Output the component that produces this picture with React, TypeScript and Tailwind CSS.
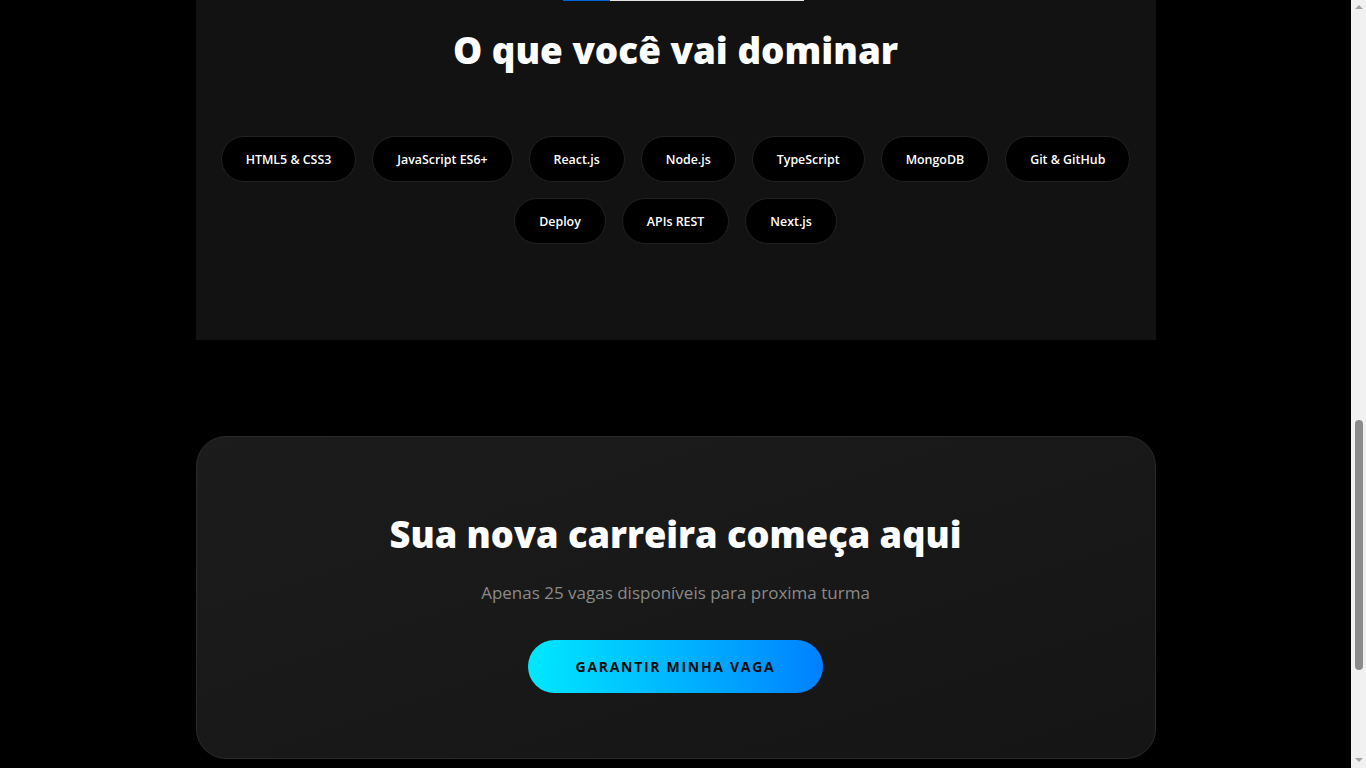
import React from 'react'

const skills = [
  'HTML5 & CSS3',
  'JavaScript ES6+',
  'React.js',
  'Node.js',
  'TypeScript',
  'MongoDB',
  'Git & GitHub',
  'Deploy',
  'APIs REST',
  'Next.js',
]

// barra de rolagem do navegador, como aparece no print
function Scrollbar() {
  return (
    <aside className="sticky top-0 flex h-screen w-[15px] shrink-0 flex-col items-center bg-[#f1f1f1]">
      <div className="mt-[5px] h-0 w-0 border-x-[4px] border-b-[4px] border-x-transparent border-b-[#a3a3a3]" />
      <div className="mt-[411px] h-[250px] w-[8px] rounded-full bg-[#8b8b8b]" />
      <div className="mt-auto mb-[6px] h-0 w-0 border-x-[4px] border-t-[4px] border-x-transparent border-t-[#a3a3a3]" />
    </aside>
  )
}

export default function App() {
  return (
    <div className="flex min-h-screen bg-black font-['Open_Sans',_'Noto_Sans',_sans-serif] text-white">
      <main className="flex-1 pb-[10px]">
        <section className="mx-auto w-[960px] bg-[#121212] pb-24">
          <div className="ml-[367px] flex h-px w-[241px]">
            <div className="h-px w-[47px] bg-[#0066d6]" />
            <div className="h-px flex-1 bg-[#e4e4e4]" />
          </div>
          <h2 className="mt-[29px] text-center text-[36.8px] font-extrabold leading-[40px]">O que você vai dominar</h2>
          <div className="mx-auto mt-[66px] flex flex-wrap justify-center gap-4">
            {skills.map((s) => (
              <span
                key={s}
                className="rounded-full border border-[#222] bg-black px-6 pt-[12.5px] pb-[11.5px] text-[12.4px] font-semibold leading-5 text-white"
              >
                {s}
              </span>
            ))}
          </div>
        </section>

        <section className="mx-auto mt-24 w-[960px] rounded-[30px] border border-[#2a2a2a] bg-gradient-to-br from-[#1c1c1c] to-[#151515] px-16 pt-[77px] pb-[65px] text-center">
          <h2 className="text-[36.2px] font-extrabold leading-[40px]">Sua nova carreira começa aqui</h2>
          <p className="mt-[26px] text-[17px] leading-[26px] text-[#8a8a8a]">
            Apenas 25 vagas disponíveis para proxima turma
          </p>
          <button
            type="button"
            className="mt-[34px] h-[53px] w-[295px] rounded-full bg-gradient-to-r from-[#00e8ff] to-[#0080ff] text-[14px] font-bold tracking-[1.7px] text-[#0a0a0a]"
          >
            GARANTIR MINHA VAGA
          </button>
        </section>
      </main>
      <Scrollbar />
    </div>
  )
}
